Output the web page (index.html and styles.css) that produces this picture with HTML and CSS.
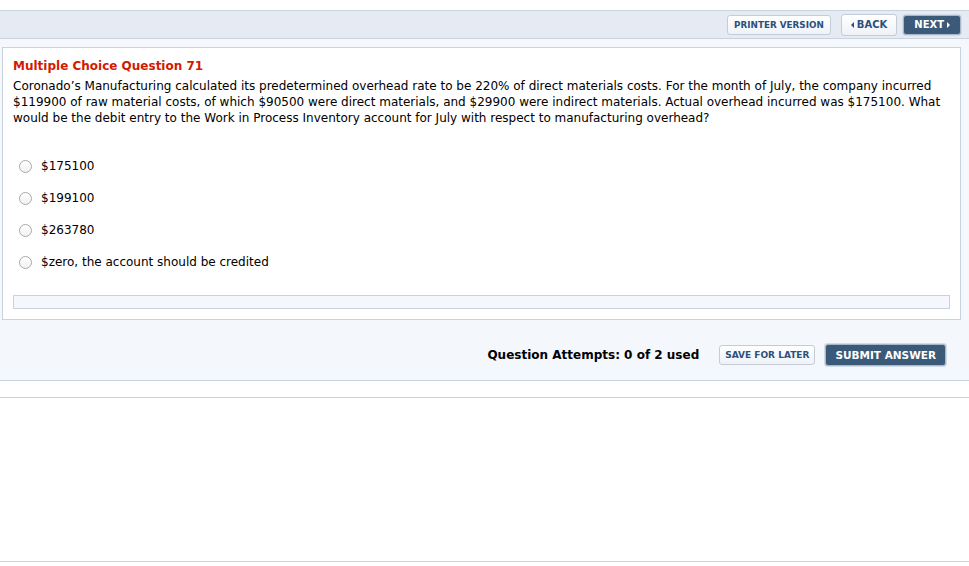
FILE: index.html
```html
<!DOCTYPE html>
<html>
<head>
<meta charset="utf-8">
<link rel="stylesheet" href="styles.css">
</head>
<body>
<div class="top-gap"></div>
<div class="toolbar">
  <button class="btn btn-light btn-print">PRINTER VERSION</button>
  <button class="btn btn-light btn-back"><span class="tri tri-left"></span>BACK</button>
  <button class="btn btn-dark btn-next">NEXT<span class="tri tri-right"></span></button>
</div>
<div class="main">
  <div class="card">
    <h1 class="qtitle">Multiple Choice Question 71</h1>
    <p class="qtext">Coronado’s Manufacturing calculated its predetermined overhead rate to be 220% of direct materials costs. For the month of July, the company incurred $119900 of raw material costs, of which $90500 were direct materials, and $29900 were indirect materials. Actual overhead incurred was $175100. What would be the debit entry to the Work in Process Inventory account for July with respect to manufacturing overhead?</p>
    <ul class="options">
      <li class="option"><span class="radio"></span><span>$175100</span></li>
      <li class="option"><span class="radio"></span><span>$199100</span></li>
      <li class="option"><span class="radio"></span><span>$263780</span></li>
      <li class="option"><span class="radio"></span><span>$zero, the account should be credited</span></li>
    </ul>
    <div class="feedback"></div>
  </div>
  <div class="actions">
    <span class="attempts">Question Attempts: 0 of 2 used</span>
    <button class="btn btn-light btn-save">SAVE FOR LATER</button>
    <button class="btn btn-dark btn-submit">SUBMIT ANSWER</button>
  </div>
</div>
<div class="strip"></div>
<div class="blank"></div>
</body>
</html>
```
FILE: styles.css
```css
html, body {
  margin: 0;
  padding: 0;
  background: #ffffff;
  font-family: "DejaVu Sans", Verdana, sans-serif;
  color: #000;
}
.top-gap {
  height: 10px;
}
.toolbar {
  height: 27px;
  background: #e6ebf3;
  border-top: 1px solid #c9d3e0;
  border-bottom: 1px solid #c9d3e0;
  display: flex;
  justify-content: flex-end;
  align-items: center;
  gap: 8px;
  padding-right: 8px;
}
.btn {
  font-family: "DejaVu Sans", Verdana, sans-serif;
  font-weight: bold;
  font-size: 9px;
  border-radius: 3px;
  height: 20px;
  padding: 0 8px;
  display: inline-flex;
  align-items: center;
  gap: 3px;
  cursor: pointer;
}
.btn-light {
  background: linear-gradient(#ffffff, #eef2f7);
  color: #2d4f7c;
  border: 1px solid #c3ccd8;
}
.btn-dark {
  background: #3b5a7a;
  color: #ffffff;
  border: 1px solid #a9b8c9;
  box-shadow: 0 0 0 1px #d3dbe5;
}
.btn-print {
  padding: 0 6px;
  font-size: 8.8px;
  margin-right: 2px;
}
.btn-back {
  height: 22px;
  font-size: 10px;
  padding: 0 9px;
}
.btn-next {
  height: 20px;
  font-size: 10px;
  padding: 0 10px;
  margin-left: -2px;
}
.tri {
  display: inline-block;
  width: 0;
  height: 0;
  border-top: 3px solid transparent;
  border-bottom: 3px solid transparent;
}
.tri-left {
  border-right: 3px solid #2d4f7c;
}
.tri-right {
  border-left: 3px solid #ffffff;
}
.main {
  background: #f4f7fb;
  padding: 8px 8px 0 2px;
  border-bottom: 1px solid #c9d3e0;
}
.card {
  background: #ffffff;
  border: 1px solid #c9d3e0;
  padding: 10px 10px 10px 10px;
}
.qtitle {
  margin: 0;
  font-size: 12px;
  font-weight: bold;
  color: #d21a00;
  line-height: 16px;
}
.qtext {
  margin: 4px 0 0 0;
  font-size: 12px;
  line-height: 16px;
}
.options {
  list-style: none;
  margin: 24px 0 0 0;
  padding: 0 0 0 6px;
}
.option {
  display: flex;
  align-items: center;
  gap: 9px;
  height: 32px;
  font-size: 12px;
}
.radio {
  display: inline-block;
  width: 13px;
  height: 13px;
  border-radius: 50%;
  border: 1px solid #aaaaaa;
  background: linear-gradient(#ffffff, #f2f2f2);
  box-sizing: border-box;
}
.feedback {
  margin-top: 17px;
  height: 12px;
  background: #f4f7fb;
  border: 1px solid #c9d3e0;
}
.actions {
  display: flex;
  justify-content: flex-end;
  align-items: flex-start;
  height: 36px;
  padding-top: 24px;
  padding-right: 15px;
  gap: 10px;
}
.attempts {
  font-size: 12px;
  font-weight: bold;
  margin-right: 10px;
  line-height: 22px;
}
.btn-save {
  font-size: 9px;
  height: 20px;
  padding: 0 5px;
  margin-top: 1px;
}
.btn-submit {
  font-size: 10.5px;
  height: 22px;
  padding: 0 9px;
}
.strip {
  height: 16px;
  border-bottom: 1px solid #c9d3e0;
}
.blank {
  height: 163px;
  border-bottom: 1px solid #c9d3e0;
}
```
